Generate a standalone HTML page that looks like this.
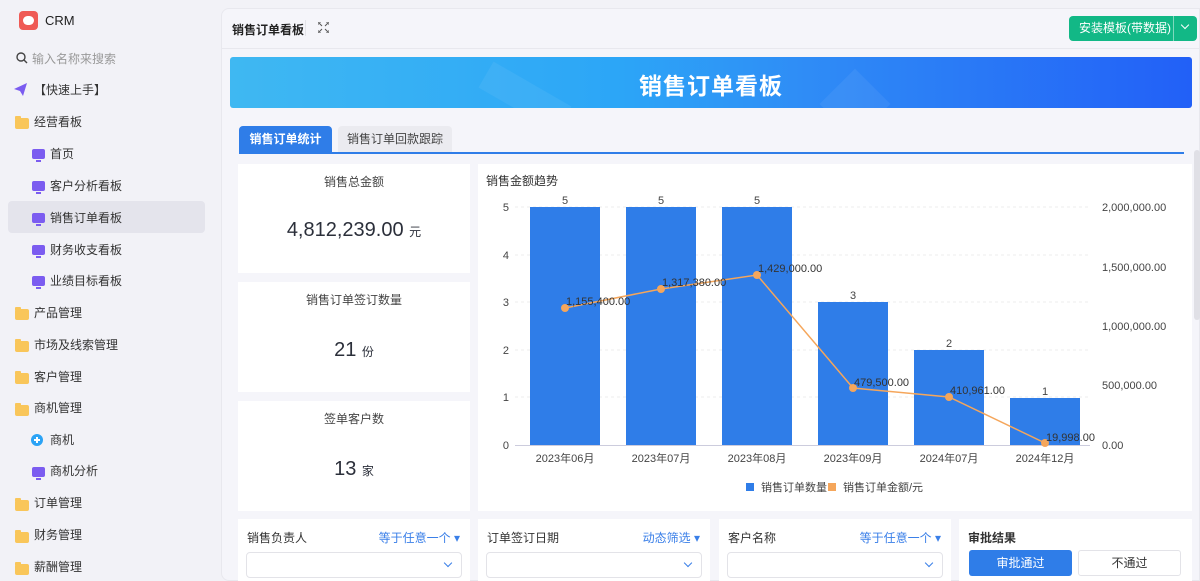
<!DOCTYPE html>
<html><head><meta charset="utf-8"><style>
*{margin:0;padding:0;box-sizing:border-box}
body{width:1200px;height:581px;overflow:hidden;background:#f2f2f7;font-family:"Liberation Sans","Noto Sans CJK SC",sans-serif;color:#333;position:relative}
.a{position:absolute}
.nav{position:absolute;left:0;font-size:12px;color:#333;height:28px;line-height:28px}
.fold{position:absolute;width:14px;height:11px;background:#f9c65a;border-radius:2px}
.fold:before{content:"";position:absolute;left:0;top:-2px;width:6px;height:3px;background:#f9c65a;border-radius:1px 1px 0 0}
.mon{position:absolute;width:13px;height:10px;background:#7b5cf0;border-radius:2px}
.mon:after{content:"";position:absolute;left:4px;bottom:-3px;width:5px;height:2px;background:#7b5cf0}
.card{position:absolute;background:#fff}
.ct{position:absolute;width:100%;text-align:center;font-size:12px;color:#444}
.cv{position:absolute;width:100%;text-align:center;font-size:20px;color:#2b2f3a}
.cv small{font-size:12px}
.flt{position:absolute;background:#fff;top:519px;height:62px}
.fl{position:absolute;left:9px;top:10px;font-size:12px;color:#333}
.fr{position:absolute;right:10px;top:10px;font-size:12px;color:#3a7fe8}
.inp{position:absolute;left:8px;right:8px;top:33px;height:26px;border:1px solid #e3e3e8;border-radius:4px}
.inp:after{content:"";position:absolute;right:10px;top:7px;width:5px;height:5px;border-right:1.3px solid #3a7fe8;border-bottom:1.3px solid #3a7fe8;transform:rotate(45deg)}
</style></head><body>
<!-- sidebar -->
<div class="a" style="left:19px;top:11px;width:19px;height:19px;background:#ef5a55;border-radius:4px"><div class="a" style="left:4px;top:5px;width:11px;height:9px;border-radius:5px;background:#fff"></div></div>
<div class="a" style="left:45px;top:13px;font-size:13px;color:#222">CRM</div>
<svg class="a" style="left:16px;top:52px" width="12" height="12" viewBox="0 0 12 12"><circle cx="5" cy="5" r="4" fill="none" stroke="#444" stroke-width="1.4"/><path d="M8 8l3 3" stroke="#444" stroke-width="1.4"/></svg>
<div class="a" style="left:32px;top:50px;font-size:12px;color:#999">输入名称来搜索</div>
<svg class="a" style="left:14px;top:83px" width="13" height="13" viewBox="0 0 13 13"><path d="M0 6L13 0L9 13L6 8Z" fill="#7b5cf0"/></svg>
<div class="nav" style="left:34px;top:76px">【快速上手】</div>
<div class="fold" style="left:15px;top:118px"></div><div class="nav" style="left:34px;top:108px">经营看板</div>
<div class="a" style="left:8px;top:201px;width:197px;height:32px;background:#e4e4ec;border-radius:4px"></div>
<div class="mon" style="left:32px;top:149px"></div><div class="nav" style="left:50px;top:140px">首页</div>
<div class="mon" style="left:32px;top:181px"></div><div class="nav" style="left:50px;top:172px">客户分析看板</div>
<div class="mon" style="left:32px;top:213px"></div><div class="nav" style="left:50px;top:204px">销售订单看板</div>
<div class="mon" style="left:32px;top:245px"></div><div class="nav" style="left:50px;top:236px">财务收支看板</div>
<div class="mon" style="left:32px;top:276px"></div><div class="nav" style="left:50px;top:267px">业绩目标看板</div>
<div class="fold" style="left:15px;top:309px"></div><div class="nav" style="left:34px;top:299px">产品管理</div>
<div class="fold" style="left:15px;top:341px"></div><div class="nav" style="left:34px;top:331px">市场及线索管理</div>
<div class="fold" style="left:15px;top:373px"></div><div class="nav" style="left:34px;top:363px">客户管理</div>
<div class="fold" style="left:15px;top:405px"></div><div class="nav" style="left:34px;top:394px">商机管理</div>
<div class="a" style="left:31px;top:434px;width:12px;height:12px;border-radius:50%;background:#2ba3f5"><div class="a" style="left:3px;top:5px;width:6px;height:2px;background:#fff"></div><div class="a" style="left:5px;top:3px;width:2px;height:6px;background:#fff"></div></div><div class="nav" style="left:50px;top:426px">商机</div>
<div class="mon" style="left:32px;top:467px"></div><div class="nav" style="left:50px;top:457px">商机分析</div>
<div class="fold" style="left:15px;top:500px"></div><div class="nav" style="left:34px;top:489px">订单管理</div>
<div class="fold" style="left:15px;top:532px"></div><div class="nav" style="left:34px;top:521px">财务管理</div>
<div class="fold" style="left:15px;top:564px"></div><div class="nav" style="left:34px;top:553px">薪酬管理</div>
<!-- main -->
<div class="a" style="left:221px;top:8px;width:979px;height:573px;background:#f5f5fa;border-radius:8px 0 0 8px;border:1px solid #e8e8ee"></div>
<div class="a" style="left:221px;top:48px;width:979px;height:1px;background:#e8e8ee"></div>
<div class="a" style="left:232px;top:21px;font-size:12px;font-weight:bold;color:#222">销售订单看板</div>
<div class="a" style="left:305px;top:20px;width:1px;height:16px;background:#e3e3e8"></div>
<svg class="a" style="left:318px;top:22px" width="11" height="11" viewBox="0 0 11 11" fill="none" stroke="#555" stroke-width="1"><path d="M0 3V0H3M8 0H11V3M11 8V11H8M3 11H0V8M1 1L4 4M10 1L7 4M10 10L7 7M1 10L4 7"/></svg>
<div class="a" style="left:1069px;top:16px;width:128px;height:25px;background:#12b886;border-radius:4px;color:#fff;font-size:12px;line-height:25px;padding-left:10px">安装模板(带数据)</div>
<div class="a" style="left:1173px;top:16px;width:1px;height:25px;background:#7fd9bd"></div>
<div class="a" style="left:1182px;top:22px;width:6px;height:6px;border-right:1.5px solid #fff;border-bottom:1.5px solid #fff;transform:rotate(45deg)"></div>
<!-- banner -->
<div class="a" style="left:230px;top:57px;width:962px;height:51px;border-radius:3px;background:linear-gradient(90deg,#3fb8f2 0%,#2ca6f7 40%,#2f8cf6 60%,#2260f7 100%);overflow:hidden">
<div class="a" style="left:250px;top:25px;width:90px;height:30px;background:rgba(255,255,255,.06);transform:rotate(30deg)"></div>
<div class="a" style="left:600px;top:22px;width:50px;height:50px;background:rgba(255,255,255,.06);transform:rotate(45deg)"></div>
<div class="a" style="left:0;width:100%;top:10px;text-align:center;font-size:23px;font-weight:bold;color:#fff;letter-spacing:1px">销售订单看板</div>
</div>
<!-- tabs -->
<div class="a" style="left:239px;top:126px;width:93px;height:27px;background:#2f7de8;border-radius:4px 4px 0 0;color:#fff;font-size:12px;font-weight:bold;text-align:center;line-height:27px">销售订单统计</div>
<div class="a" style="left:338px;top:126px;width:114px;height:27px;background:#ebebf0;border-radius:4px 4px 0 0;color:#444;font-size:12px;text-align:center;line-height:27px">销售订单回款跟踪</div>
<div class="a" style="left:239px;top:152px;width:945px;height:2px;background:#2f7de8"></div>
<!-- stat cards -->
<div class="card" style="left:238px;top:164px;width:232px;height:109px"><div class="ct" style="top:9px">销售总金额</div><div class="cv" style="top:55px">4,812,239.00 <small>元</small></div></div>
<div class="card" style="left:238px;top:282px;width:232px;height:110px"><div class="ct" style="top:9px">销售订单签订数量</div><div class="cv" style="top:57px">21 <small>份</small></div></div>
<div class="card" style="left:238px;top:401px;width:232px;height:110px"><div class="ct" style="top:9px">签单客户数</div><div class="cv" style="top:57px">13 <small>家</small></div></div>
<!-- chart -->
<div class="card" style="left:478px;top:164px;width:714px;height:347px"></div>
<div class="a" style="left:486px;top:172px;font-size:12px;color:#333">销售金额趋势</div>
<svg class="a" style="left:0;top:0" width="1200" height="581" font-family="Liberation Sans,Noto Sans CJK SC,sans-serif" font-size="11" fill="#444">
<g stroke="#ececec" stroke-dasharray="3,3"><line x1="515" x2="1090" y1="207" y2="207"/><line x1="515" x2="1090" y1="255" y2="255"/><line x1="515" x2="1090" y1="302" y2="302"/><line x1="515" x2="1090" y1="350" y2="350"/><line x1="515" x2="1090" y1="397" y2="397"/></g>
<line x1="515" x2="1090" y1="445.5" y2="445.5" stroke="#ccd" />
<g text-anchor="end"><text x="509" y="211">5</text><text x="509" y="259">4</text><text x="509" y="306">3</text><text x="509" y="354">2</text><text x="509" y="401">1</text><text x="509" y="449">0</text></g>
<g><text x="1102" y="211">2,000,000.00</text><text x="1102" y="330">1,000,000.00</text><text x="1102" y="271">1,500,000.00</text><text x="1102" y="389">500,000.00</text><text x="1102" y="449">0.00</text></g>
<g fill="#2f7de8"><rect x="530" y="207" width="70" height="238"/><rect x="626" y="207" width="70" height="238"/><rect x="722" y="207" width="70" height="238"/><rect x="818" y="302" width="70" height="143"/><rect x="914" y="350" width="70" height="95"/><rect x="1010" y="398" width="70" height="47"/></g>
<g text-anchor="middle"><text x="565" y="204">5</text><text x="661" y="204">5</text><text x="757" y="204">5</text><text x="853" y="299">3</text><text x="949" y="347">2</text><text x="1045" y="395">1</text>
<text x="565" y="462">2023年06月</text><text x="661" y="462">2023年07月</text><text x="757" y="462">2023年08月</text><text x="853" y="462">2023年09月</text><text x="949" y="462">2024年07月</text><text x="1045" y="462">2024年12月</text></g>
<polyline points="565,308 661,289 757,275 853,388 949,397 1045,443" fill="none" stroke="#f5a65b" stroke-width="1.5"/>
<g fill="#f5a65b"><circle cx="565" cy="308" r="4"/><circle cx="661" cy="289" r="4"/><circle cx="757" cy="275" r="4"/><circle cx="853" cy="388" r="4"/><circle cx="949" cy="397" r="4"/><circle cx="1045" cy="443" r="4"/></g>
<g fill="#333"><text x="566" y="305">1,155,400.00</text><text x="662" y="286">1,317,380.00</text><text x="758" y="272">1,429,000.00</text><text x="854" y="386">479,500.00</text><text x="950" y="394">410,961.00</text><text x="1046" y="441">19,998.00</text></g>
<rect x="746" y="483" width="8" height="8" fill="#2f7de8"/><text x="761" y="491">销售订单数量</text>
<rect x="828" y="483" width="8" height="8" fill="#f5a65b"/><text x="843" y="491">销售订单金额/元</text>
</svg>
<!-- filters -->
<div class="flt" style="left:238px;width:232px"><div class="fl">销售负责人</div><div class="fr">等于任意一个 ▾</div><div class="inp"></div></div>
<div class="flt" style="left:478px;width:232px"><div class="fl">订单签订日期</div><div class="fr">动态筛选 ▾</div><div class="inp"></div></div>
<div class="flt" style="left:719px;width:232px"><div class="fl">客户名称</div><div class="fr">等于任意一个 ▾</div><div class="inp"></div></div>
<div class="flt" style="left:959px;width:233px"><div class="fl" style="font-weight:bold">审批结果</div>
<div class="a" style="left:10px;top:31px;width:103px;height:26px;background:#2f7de8;border-radius:3px;color:#fff;font-size:12px;text-align:center;line-height:26px">审批通过</div>
<div class="a" style="left:119px;top:31px;width:103px;height:26px;border:1px solid #e3e3e8;border-radius:3px;font-size:12px;text-align:center;line-height:24px">不通过</div></div>
<div class="a" style="left:1194px;top:150px;width:6px;height:170px;background:#e0e0e6;border-radius:3px"></div>
</body></html>
